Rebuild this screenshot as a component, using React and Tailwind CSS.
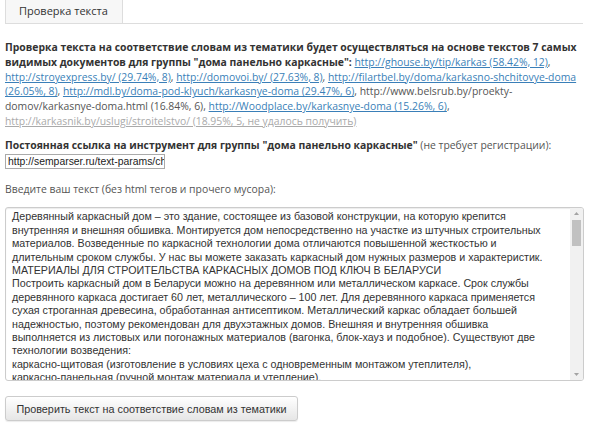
import React from 'react'

const sans = { fontFamily: '"Open Sans", sans-serif' }
const arial = { fontFamily: '"Liberation Sans", Arial, sans-serif' }

const textLines = [
  'Деревянный каркасный дом – это здание, состоящее из базовой конструкции, на которую крепится',
  'внутренняя и внешняя обшивка. Монтируется дом непосредственно на участке из штучных строительных',
  'материалов. Возведенные по каркасной технологии дома отличаются повышенной жесткостью и',
  'длительным сроком службы. У нас вы можете заказать каркасный дом нужных размеров и характеристик.',
  'МАТЕРИАЛЫ ДЛЯ СТРОИТЕЛЬСТВА КАРКАСНЫХ ДОМОВ ПОД КЛЮЧ В БЕЛАРУСИ',
  'Построить каркасный дом в Беларуси можно на деревянном или металлическом каркасе. Срок службы',
  'деревянного каркаса достигает 60 лет, металлического – 100 лет. Для деревянного каркаса применяется',
  'сухая строганная древесина, обработанная антисептиком. Металлический каркас обладает большей',
  'надежностью, поэтому рекомендован для двухэтажных домов. Внешняя и внутренняя обшивка',
  'выполняется из листовых или погонажных материалов (вагонка, блок-хауз и подобное). Существуют две',
  'технологии возведения:',
  'каркасно-щитовая (изготовление в условиях цеха с одновременным монтажом утеплителя),',
  'каркасно-панельная (ручной монтаж материала и утепление).',
]

function A({ children }) {
  return <a href="#" className="text-[#3a7fb8] underline">{children}</a>
}

export default function App() {
  return (
    <div className="w-[589px] h-[432px] bg-white overflow-hidden text-[#555]" style={sans}>
      {/* tabs */}
      <div className="ml-[5px] mr-[6px] h-[24px] border-b border-[#ddd] flex">
        <div className="w-[118px] h-[24px] bg-[#f7f7f7] border-x border-b border-[#ddd] flex items-center pl-[13px] text-[11px] text-[#333]">
          Проверка текста
        </div>
      </div>

      <div className="px-[5px] pt-[16px] text-[10.4px] leading-[14.8px]">
        <p>
          <b className="text-[#333]">Проверка текста на соответствие словам из тематики будет осуществляться на основе текстов 7 самых видимых документов для группы "дома панельно каркасные": </b>
          <A>http://ghouse.by/tip/karkas (58.42%, 12)</A>,{' '}
          <A>http://stroyexpress.by/ (29.74%, 8)</A>, <A>http://domovoi.by/ (27.63%, 8)</A>,{' '}
          <A>http://filartbel.by/doma/karkasno-shchitovye-doma (26.05%, 8)</A>,{' '}
          <A>http://mdl.by/doma-pod-klyuch/karkasnye-doma (29.47%, 6)</A>, http://www.belsrub.by/proekty-domov/karkasnye-doma.html (16.84%, 6),{' '}
          <A>http://Woodplace.by/karkasnye-doma (15.26%, 6)</A>,{' '}
          <a href="#" className="text-[#aaa] underline">http://karkasnik.by/uslugi/stroitelstvo/ (18.95%, 5, не удалось получить)</a>
        </p>

        <p className="mt-[9px]">
          <b className="text-[#333]">Постоянная ссылка на инструмент для группы "дома панельно каркасные"</b> (не требует регистрации):
        </p>
        <div className="mt-px w-[160px] h-[15px] border border-[#aaa] overflow-hidden whitespace-nowrap text-[10.4px] leading-[13px] px-[2px] text-[#222]" style={arial}>
          http://semparser.ru/text-params/cherepica
        </div>

        <p className="mt-[13px]">Введите ваш текст (без html тегов и прочего мусора):</p>
      </div>

      {/* textarea */}
      <div className="mt-[11px] mx-[5px] h-[174px] border border-[#ccc] rounded-[3px] shadow-[inset_0_1px_1px_rgba(0,0,0,0.08)] flex overflow-hidden">
        <div className="flex-1 pl-[6px] pt-[2px] text-[10.7px] leading-[13.4px] text-[#333] whitespace-nowrap overflow-hidden" style={arial}>
          {textLines.map((l, i) => <div key={i}>{l}</div>)}
        </div>
        <div className="w-[13px] bg-[#f1f1f1] flex flex-col items-center">
          <div className="h-[11px] w-full flex items-center justify-center">
            <svg width="5" height="3" viewBox="0 0 5 3"><path d="M0 3 L2.5 0 L5 3Z" fill="#a3a3a3" /></svg>
          </div>
          <div className="w-[9px] h-[26px] bg-[#c1c1c1] mt-[1px]" />
          <div className="flex-1" />
          <div className="h-[11px] w-full flex items-center justify-center">
            <svg width="5" height="3" viewBox="0 0 5 3"><path d="M0 0 L2.5 3 L5 0Z" fill="#a3a3a3" /></svg>
          </div>
        </div>
      </div>

      <button className="mt-[15px] ml-[5px] h-[25px] w-[293px] rounded-[3px] border border-[#ccc] bg-gradient-to-b from-white to-[#e6e6e6] shadow-[0_1px_1px_rgba(0,0,0,0.08)] text-[10.8px] text-[#333]" style={arial}>
        Проверить текст на соответствие словам из тематики
      </button>
    </div>
  )
}
